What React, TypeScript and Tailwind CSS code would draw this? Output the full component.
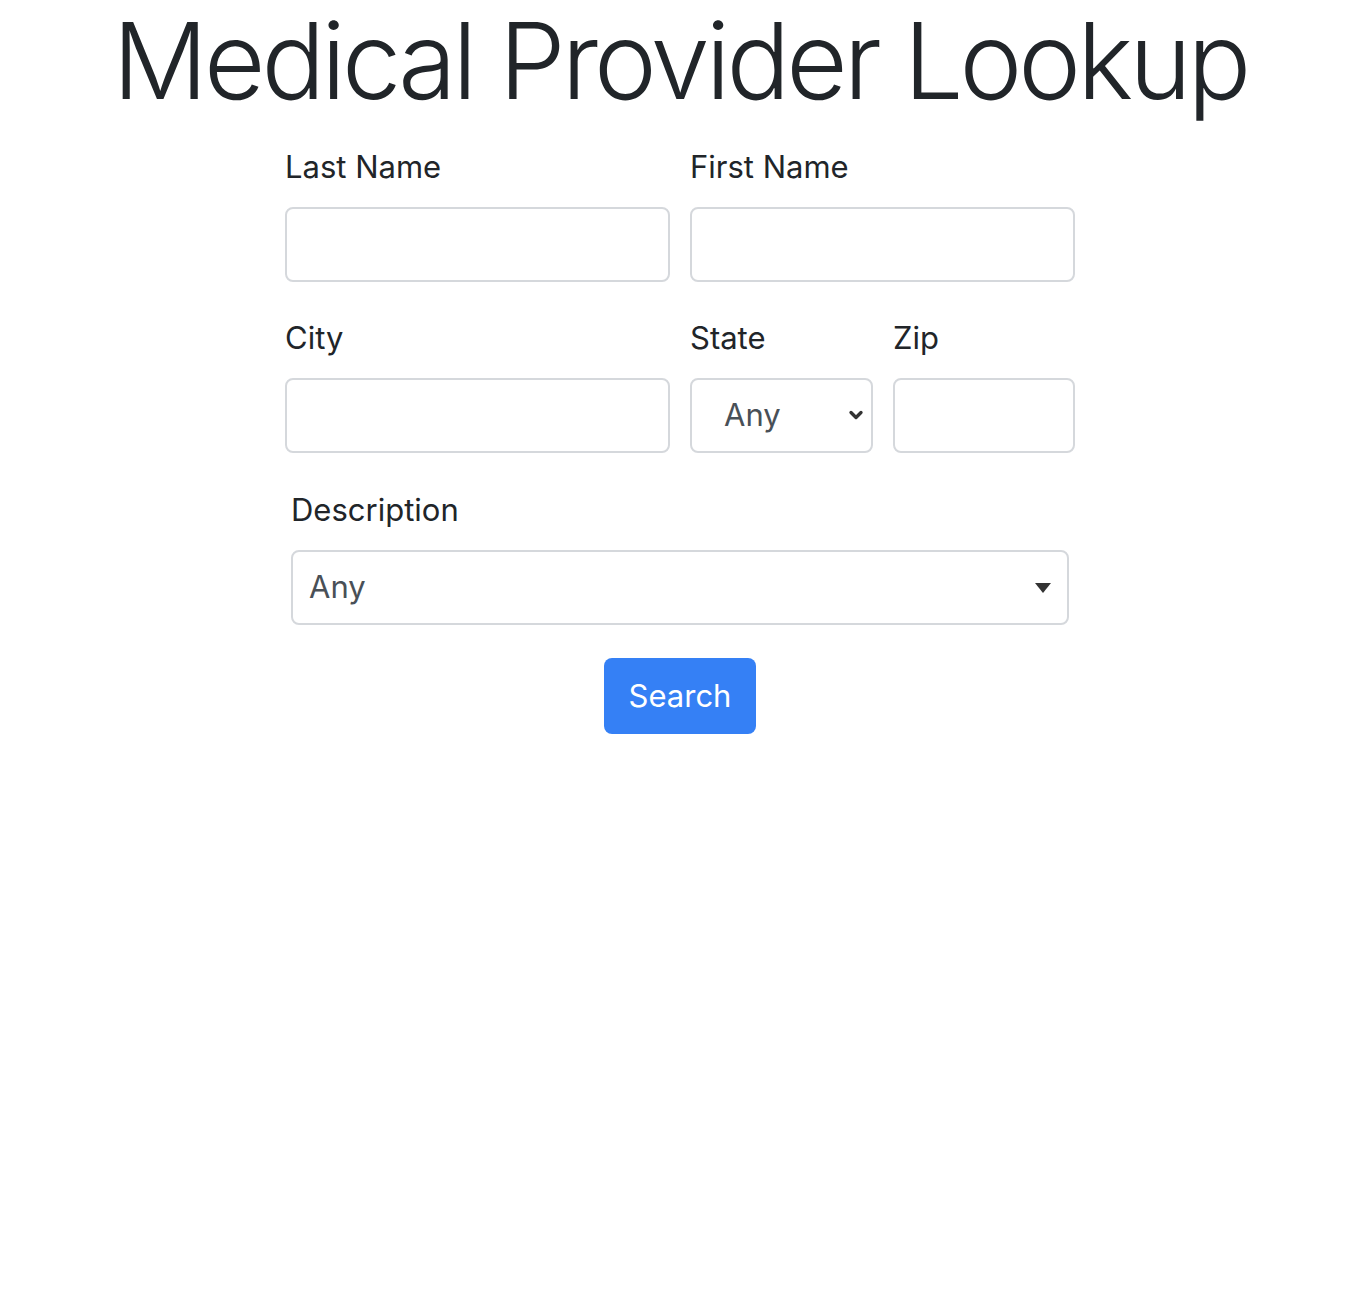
import { ChevronDown } from 'lucide-react';

const font = { fontFamily: 'Inter, "Liberation Sans", sans-serif' };

function Field({ label, className = '' }: { label: string; className?: string }) {
  return (
    <div className={`flex flex-col ${className}`}>
      <label className="text-[31px] leading-[48px] text-[#212529] mb-4">{label}</label>
      <input className="h-[75px] w-full rounded-[8px] border-2 border-[#d5d8dc] bg-white px-5 text-[31px] outline-none" />
    </div>
  );
}

export default function App() {
  return (
    <div className="min-h-[1292px] bg-white pl-[6px] flex flex-col items-center" style={font}>
      <h1 className="text-[106px] leading-[122px] font-light text-[#212529] tracking-[-4px] whitespace-nowrap">
        Medical Provider Lookup
      </h1>

      <form className="mt-[21px] w-[790px] flex flex-col" onSubmit={(e) => e.preventDefault()}>
        <div className="grid grid-cols-[385px_385px] gap-x-[20px]">
          <Field label="Last Name" />
          <Field label="First Name" />
        </div>

        <div className="mt-[32px] grid grid-cols-[385px_183px_182px] gap-x-[20px]">
          <Field label="City" />
          <div className="flex flex-col">
            <label className="text-[31px] leading-[48px] text-[#212529] mb-4">State</label>
            <div className="relative">
              <select className="appearance-none h-[75px] w-full rounded-[8px] border-2 border-[#d5d8dc] bg-white pl-[32px] text-[31px] text-[#495057] outline-none">
                <option>Any</option>
              </select>
              <ChevronDown size={20} strokeWidth={4} className="absolute right-[7px] top-[27px] text-[#333]" />
            </div>
          </div>
          <Field label="Zip" />
        </div>

        <div className="mt-[33px] px-[6px] flex flex-col">
          <label className="text-[31px] leading-[48px] text-[#212529] mb-4">Description</label>
          <div className="relative">
            <select className="appearance-none h-[75px] w-full rounded-[8px] border-2 border-[#d5d8dc] bg-white pl-[16px] text-[31px] text-[#495057] outline-none">
              <option>Any</option>
            </select>
            <svg width="16" height="10" viewBox="0 0 16 10" className="absolute right-[18px] top-[33px]">
              <path d="M0 0H16L8 10Z" fill="#333" />
            </svg>
          </div>
        </div>

        <div className="mt-[33px] flex justify-center">
          <button className="h-[76px] w-[152px] rounded-[8px] bg-[#3580f5] text-[31px] text-white">
            Search
          </button>
        </div>
      </form>
    </div>
  );
}
